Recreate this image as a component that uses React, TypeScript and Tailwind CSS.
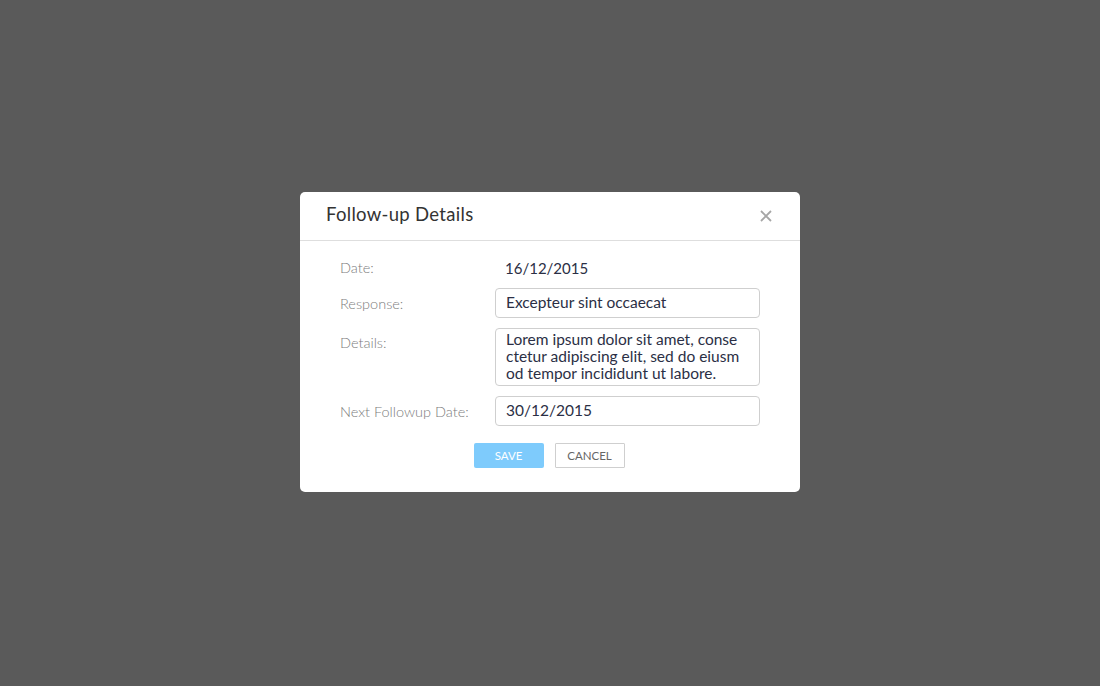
import React from "react";

export default function App() {
  const font = { fontFamily: "Lato, 'Noto Sans', 'Liberation Sans', sans-serif" };
  return (
    <div className="w-full h-[686px] bg-[#5a5a5a] flex items-start justify-center pt-[192px]" style={font}>
      <div className="w-[500px] h-[300px] bg-white rounded-[5px] flex flex-col">
        <div className="h-[49px] border-b border-[#dedede] flex items-center justify-between pl-[26px] pr-[28px] pb-[3px]">
          <div className="text-[18.5px] text-[#333] tracking-[0.3px]">Follow-up Details</div>
          <svg width="12" height="12" viewBox="0 0 12 12" className="mt-[2px]">
            <path d="M1 1L11 11M11 1L1 11" stroke="#a6a6a6" strokeWidth="1.8" />
          </svg>
        </div>
        <div className="pl-[40px] pr-[40px] pt-[17px] flex flex-col">
          <div className="flex h-[20px] items-center">
            <div className="w-[155px] text-[14.5px] text-[#7c7c7c] font-light">Date:</div>
            <div className="pl-[10px] text-[15px] text-[#2b2f45]">16/12/2015</div>
          </div>
          <div className="flex mt-[10px]">
            <div className="w-[155px] text-[14.5px] text-[#7c7c7c] font-light pt-[5px]">Response:</div>
            <div className="flex-1 h-[30px] border border-[#cfcfcf] rounded-[4px] px-[10px] flex items-center text-[15.5px] text-[#2b2f45]">
              Excepteur sint occaecat
            </div>
          </div>
          <div className="flex mt-[10px]">
            <div className="w-[155px] text-[14.5px] text-[#7c7c7c] font-light pt-[4px]">Details:</div>
            <div className="flex-1 h-[58px] border border-[#cfcfcf] rounded-[4px] px-[10px] pt-[2px] text-[15.5px] leading-[17px] text-[#2b2f45]">
              Lorem ipsum dolor sit amet, conse
              <br />
              ctetur adipiscing elit, sed do eiusm
              <br />
              od tempor incididunt ut labore.
            </div>
          </div>
          <div className="flex mt-[10px]">
            <div className="w-[155px] text-[14.5px] text-[#7c7c7c] font-light pt-[5px]">Next Followup Date:</div>
            <div className="flex-1 h-[30px] border border-[#cfcfcf] rounded-[4px] px-[10px] flex items-center text-[15.5px] text-[#2b2f45]">
              30/12/2015
            </div>
          </div>
          <div className="flex justify-center gap-[11px] mt-[17px] pr-[2px]">
            <div className="w-[70px] h-[25px] bg-[#7ecbfc] rounded-[2px] flex items-center justify-center text-[11.5px] text-white">SAVE</div>
            <div className="w-[70px] h-[25px] border border-[#cfcfcf] rounded-[1px] flex items-center justify-center text-[11.5px] text-[#666]">CANCEL</div>
          </div>
        </div>
      </div>
    </div>
  );
}
